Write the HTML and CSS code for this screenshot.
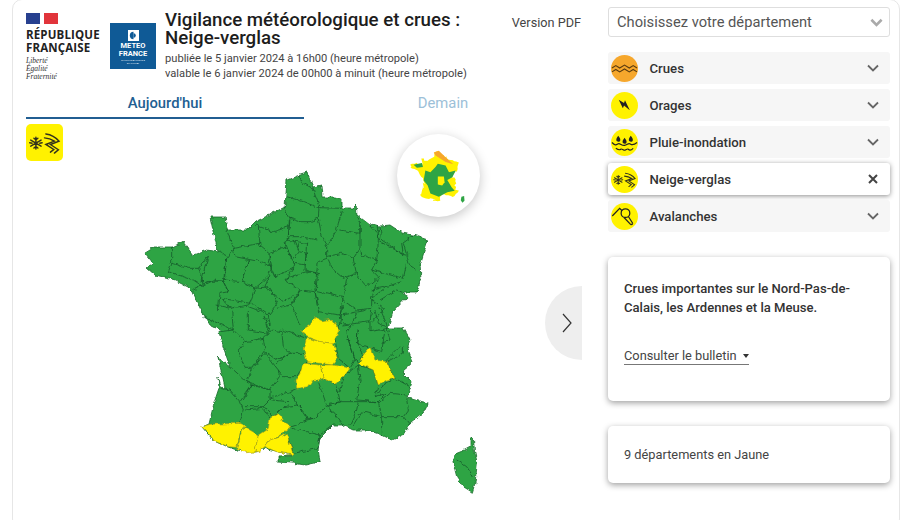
FILE: index.html
```html
<!DOCTYPE html>
<html lang="fr">
<head>
<meta charset="utf-8">
<title>Vigilance météorologique et crues</title>
<link rel="stylesheet" href="styles.css">
</head>
<body>
<svg class="defs" width="0" height="0" aria-hidden="true">
  <defs>
    <filter id="wob" x="-5%" y="-5%" width="110%" height="110%" color-interpolation-filters="sRGB">
      <feTurbulence type="fractalNoise" baseFrequency=".2" numOctaves="2" seed="4" result="n"/>
      <feDisplacementMap in="SourceGraphic" in2="n" scale="4.500" xChannelSelector="R" yChannelSelector="G"/>
    </filter>
    <filter id="soft" x="-5%" y="-5%" width="110%" height="110%"><feGaussianBlur stdDeviation=".9"/></filter>
    <symbol id="ic-neige" viewBox="0 0 28 28">
      <g fill="none" stroke="#33331c" stroke-width="1.100" stroke-linecap="round">
        <path d="M7.500 10v9M3.600 12.200l7.800 4.600M3.600 16.800l7.800-4.600M6 10.800l1.500 1.200 1.500-1.200M6 18.200l1.500-1.200 1.500 1.200M2.800 14.200l1.800.3M12.200 14.200l-1.800.3"/>
        <path d="M15 7.500c4 .5 7.500 2.500 10 5.500l-6.500 2.500 6 4-3 2.500"/>
        <path d="M14 10.500c3 .2 5.500 1.200 7.500 2.500l-6.500 2.500 6 3.800-2.500 2"/>
      </g>
    </symbol>
    <path id="france" d="M287 180L297 176L307 173L310 180L313 187L322 185L323 197L335 197L342 199L342 208L352 208L356 204L357 215L370 225L374 224L380 226L390 225L402 233L413 235L428 240L424 252L420 265L421 278L417 292L403 292L407 297L393 312L388 328L403 328L410 340L407 347L413 362L402 372L412 382L407 398L428 403L423 413L410 423L403 435L392 440L382 435L367 430L353 430L343 425L333 425L320 438L318 448L320 462L305 465L292 463L278 462L278 456L293 455L263 448L255 452L237 450L228 447L213 440L202 427L209 424L214 403L219 388L218 377L221 387L225 388L218 357L230 367L222 343L219 332L222 331L210 325L200 308L193 292L188 287L170 278L155 275L147 268L153 263L145 253L155 247L172 247L183 242L193 255L207 250L218 252L210 217L225 217L227 230L247 230L255 222L285 207Z"/>
    <path id="corse" d="M843 380L850 382L853 420L862 460L855 520L847 547L820 530L800 500L795 480L788 450L800 430L825 420L843 410Z"/>
  </defs>
</svg>

<div class="frame">
  <main class="left">
    <header class="head">
      <div class="rf">
        <div class="flag"><i class="flag-blue"></i><i class="flag-red"></i></div>
        <div class="rf-name">RÉPUBLIQUE<br>FRANÇAISE</div>
        <div class="rf-motto">Liberté<br>Égalité<br>Fraternité</div>
      </div>
      <div class="mf">
        <svg class="mf-mark" viewBox="0 0 12 12" aria-hidden="true"><rect width="12" height="12" fill="#fff"/><path d="M6 2a4 4 0 1 0 0 8z" fill="#0f5a96"/><path d="M6 3.500a2.500 2.500 0 0 1 0 5z" fill="#0f5a96"/></svg>
        <div class="mf-name">METEO<br>FRANCE</div>
        <div class="mf-tag">LE NOUVEAU MONDE<br>DU CLIMAT</div>
      </div>
      <div class="head-text">
        <h1>Vigilance météorologique et crues :<br>Neige-verglas</h1>
        <p>publiée le 5 janvier 2024 à 16h00 (heure métropole)<br>valable le 6 janvier 2024 de 00h00 à minuit (heure métropole)</p>
      </div>
      <a class="pdf">Version PDF</a>
    </header>

    <nav class="tabs">
      <a class="tab tab-on">Aujourd'hui</a>
      <a class="tab">Demain</a>
    </nav>

    <section class="map-area">
      <svg class="map" viewBox="26 119 556 401" aria-label="Carte de France">
        <g filter="url(#wob)">
        <use href="#france" fill="#2ea444" stroke="#1b6a2c" stroke-width=".8" stroke-linejoin="round"/>
        <g fill="none" stroke="#14582a" stroke-width="2.300" stroke-linejoin="round" transform="translate(130 165) scale(.33333)">
          <path d="M505 30L520 55L548 70M470 95L520 110L565 128L635 130M548 65L555 90L570 128M462 125L480 160L510 170L540 170L565 160L567 128M565 160L575 210L590 245L620 195L625 175L637 135M628 195L690 205L690 175L680 155M690 175L690 250L695 270L740 285L745 230L745 180M590 245L590 275L635 265L670 280L690 250M720 180L745 210L750 230L825 270L835 270M750 185L755 225L820 268L815 235L850 210M820 235L830 270L838 300L860 315M740 285L725 315L820 340L830 295M670 280L680 330L710 365L745 335L725 315M590 275L605 310L640 340L680 325M590 280L565 290L560 320L555 375L640 395L650 340L670 330M635 400L645 410L680 435L725 430L725 400L745 340M725 375L770 365L815 350M725 400L770 365M750 405L800 375L825 385M725 405L760 430L745 450L725 470M640 420L630 450L640 480L720 470L725 435M720 470L720 500L775 490L750 430"/>
          <path d="M375 180L430 200L478 185L480 160M385 185L390 240L420 265L465 245L475 215L478 190M478 165L475 215L510 215L565 225M470 225L530 235M505 235L505 260L530 265M465 230L485 285L505 260L490 225M495 295L525 300L530 265M530 230L525 315L565 325M420 265L415 290L435 335L490 310L495 295L465 245M310 250L390 235M310 250L315 275L390 290L425 305L415 265M265 260L295 275L310 250L290 195M355 285L335 345L375 370L415 335L425 305M290 280L283 345L335 350L355 285M235 270L213 350L280 348L290 280M125 245L125 295L175 310L205 310L235 270M125 295L115 320M115 320L190 345L220 365L213 325L205 310M190 375L250 345L280 350L295 380L270 385L265 435M295 380L280 350M335 350L375 370L360 415L275 400M260 420L300 430L275 400M300 430L355 420L360 415M375 370L415 365L445 410L415 450L365 415M415 335L405 365L460 410L505 385L510 375L465 345L490 310M465 340L530 320L565 325L555 380L510 375M510 380L485 420L510 480M565 420L555 380M555 380L565 440L630 450L640 395M415 450L420 480M440 430L480 420L505 385M355 425L395 440L420 480"/>
        </g>
        <g transform="translate(190 310) scale(.33333)">
          <g fill="none" stroke="#14582a" stroke-width="2.300" stroke-linejoin="round">
            <path d="M40 20L130 60L125 0M95 65L130 60L165 95L145 120L165 175M175 0L175 60L235 70L220 10M165 95L220 85L225 120L185 175L165 175M220 85L245 60L275 65L280 110L300 130L260 150L225 125M275 60L350 85M300 130L342 130M260 160L295 130M348 155L320 200L280 200L265 180M170 215L185 180L225 130L265 180L268 200L240 240L170 215M240 265L300 245L320 235M245 270L295 275M92 235L120 240L150 275L185 225L170 215L120 170M160 270L185 225L240 240L240 270L220 290L165 290M150 275L160 300L150 340M165 300L220 295L240 325M222 290L250 320L280 290M300 250L325 285L280 290M385 215L410 285L375 325L350 325L325 285M325 285L355 325L320 345L305 350M400 205L440 225L450 275L410 285M410 290L450 275L505 275L500 300L480 345M410 290L435 310L460 345M350 330L375 325M430 345L390 375L350 365L305 355M390 375L385 415L310 430L290 370M445 250L465 195L505 165L510 210L500 270M505 165L550 180L565 225L555 260L590 250L565 275L500 270M505 275L565 275L575 320L515 305L490 345M575 320L575 375M575 320L640 320L660 345M640 320L655 300L650 265M565 280L600 250L650 255M565 250L590 215L615 205L660 230M590 155L640 130L640 110M615 205L590 155M575 100L600 90L590 50M630 110L585 155M505 60L500 100L575 125L585 60M470 75L495 145L505 160L520 130L500 100L505 60M435 85L445 145L480 175L495 150L470 75M445 60L455 15L530 0M470 70L500 10M225 30L240 65M555 0L565 40L590 50"/>
          </g>
          <g fill="#fff200" stroke="#a49a1a" stroke-width="1.800" stroke-linejoin="round">
            <path d="M332 62L360 45L375 22L395 32L425 28L447 60L430 100L390 95L350 80L345 70Z"/>
            <path d="M352 85L390 95L430 100L445 145L430 165L390 160L350 155L342 120Z"/>
            <path d="M340 160L390 165L400 205L385 210L370 210L355 230L320 235L318 210L330 190Z"/>
            <path d="M392 165L430 165L480 175L465 195L440 222L420 215L400 205Z"/>
            <path d="M540 112L555 150L590 155L615 205L590 210L565 225L550 180L505 160L520 135Z"/>
            <path d="M35 350L60 343L150 340L163 345L150 370L140 412L115 410L70 390L55 370Z"/>
            <path d="M163 350L205 375L195 425L170 428L140 415L155 370Z"/>
            <path d="M265 310L280 335L305 350L270 375L235 395L225 410L205 425L195 425L205 375L235 355L240 325Z"/>
            <path d="M270 380L290 370L310 435L260 425L225 410L240 390Z"/>
          </g>
          <use href="#corse" fill="#2ea444" stroke="#1b6a2c" stroke-width="2.300"/>
          <path d="M800 450L830 470L850 500" fill="none" stroke="#14582a" stroke-width="2.300"/>
        </g>
        </g>
      </svg>

      <div class="risk-badge"><svg class="icon"><use href="#ic-neige"/></svg></div>

      <div class="mini">
        <svg viewBox="51 42 246 246" aria-hidden="true">
          <g filter="url(#soft)">
            <use href="#france" transform="translate(16 4) scale(.51)" fill="#fff200"/>
            <path d="M135 150L150 155L165 140L172 130L195 135L205 155L225 150L215 170L200 178L213 200L222 210L200 215L175 228L150 218L142 195L130 180Z" fill="#2ea444"/>
            <path d="M172 168L190 168L192 185L185 195L172 192Z" fill="#fff200"/>
            <path d="M100 133L125 128L128 140L110 142Z" fill="#2ea444"/>
            <path d="M160 97L175 92L192 108L218 132L195 125L165 106Z" fill="#f6a72c"/>
            <path d="M242 228L250 226L251 240L245 246L240 238Z" fill="#2ea444"/>
          </g>
        </svg>
      </div>

      <button class="next" aria-label="Suivant">
        <svg viewBox="0 0 10 20" aria-hidden="true"><path d="M1 1l8 9-8 9" fill="none" stroke="#333" stroke-width="1.200"/></svg>
      </button>
    </section>
  </main>

  <aside class="right">
    <div class="select">
      <span>Choisissez votre département</span>
      <svg viewBox="0 0 14 9" aria-hidden="true"><path d="M1.500 1.500L7 7l5.500-5.500" fill="none" stroke="#aaa" stroke-width="2.800"/></svg>
    </div>

    <ul class="risks">
      <li class="risk">
        <svg class="bubble orange" viewBox="0 0 28 28" aria-hidden="true"><g fill="none" stroke="#5b3c10" stroke-width="1.200"><path d="M1 13.500l4-2.500 4 2.500 5-3 5 3 4-2.500 4 2.500"/><path d="M1 17.500l4-2.500 4 2.500 5-3 5 3 4-2.500 4 2.500"/></g></svg>
        <span>Crues</span>
        <svg class="chev" viewBox="0 0 12 8" aria-hidden="true"><path d="M1 1.500l5 5 5-5"/></svg>
      </li>
      <li class="risk">
        <svg class="bubble" viewBox="0 0 28 28" aria-hidden="true"><path d="M8 8l5.500 3.500 1-3 5 10.500-6-5-1.200 2.800z" fill="#222"/></svg>
        <span>Orages</span>
        <svg class="chev" viewBox="0 0 12 8" aria-hidden="true"><path d="M1 1.500l5 5 5-5"/></svg>
      </li>
      <li class="risk">
        <svg class="bubble" viewBox="0 0 28 28" aria-hidden="true"><path d="M7.500 7c1.800 2.600 2.600 3.600 2 5.200s-4 1.200-4-.8 1-2.600 2-4.400zM20.500 7c1.800 2.600 2.600 3.600 2 5.200s-4 1.200-4-.8 1-2.600 2-4.400zM14 9c1.800 2.600 2.600 3.600 2 5.200s-4 1.200-4-.8 1-2.600 2-4.400z" fill="#222"/><g fill="none" stroke="#222" stroke-width="1.200"><path d="M1 14c3 3 4 3 6 1.500s4 2 7 1.500 4-3 6-1.500 4 1 7-1.500"/><path d="M5 20c3 2 4 2 5 1s3 1 4 1 3-2 4-1 3 1 5-1"/></g></svg>
        <span>Pluie-inondation</span>
        <svg class="chev" viewBox="0 0 12 8" aria-hidden="true"><path d="M1 1.500l5 5 5-5"/></svg>
      </li>
      <li class="risk risk-on">
        <svg class="bubble" aria-hidden="true"><use href="#ic-neige"/></svg>
        <span>Neige-verglas</span>
        <svg class="close" viewBox="0 0 10 10" aria-hidden="true"><path d="M1 1l8 8M9 1l-8 8"/></svg>
      </li>
      <li class="risk">
        <svg class="bubble" viewBox="0 0 28 28" aria-hidden="true"><g fill="none" stroke="#222" stroke-width="1.300"><path d="M1.300 13.500L9 5.500l2.500 2.500"/><circle cx="15" cy="10.500" r="4.500"/><path d="M18 14l4.500 7M13.500 15l7 7.500M22.500 21a2 2 0 0 1-2 1.500"/></g></svg>
        <span>Avalanches</span>
        <svg class="chev" viewBox="0 0 12 8" aria-hidden="true"><path d="M1 1.500l5 5 5-5"/></svg>
      </li>
    </ul>

    <div class="card card-info">
      <p class="card-strong">Crues importantes sur le Nord-Pas-de-Calais, les Ardennes et la Meuse.</p>
      <a class="bulletin">Consulter le bulletin <i class="caret"></i></a>
    </div>

    <div class="card card-count">9 départements en Jaune</div>
  </aside>
</div>
</body>
</html>
```

FILE: styles.css
```css
* { box-sizing: border-box; }

html, body {
  margin: 0;
  height: 520px;
  overflow: hidden;
  background: #fff;
  font-family: Roboto, "Liberation Sans", sans-serif;
  color: #333;
}

.defs { display: block; height: 0; }

.frame {
  display: flex;
  gap: 26px;
  width: 888px;
  height: 530px;
  margin: -1px 0 0 12px;
  padding: 7px 9px 0 13px;
  border: 1px solid #e6e6e6;
  border-radius: 10px;
}

/* left column */
.left { width: 556px; flex: none; display: flex; flex-direction: column; }

.head { display: flex; height: 82px; }

.rf { width: 74px; flex: none; margin-right: 10px; padding-top: 6px; }
.flag { display: flex; justify-content: space-between; width: 32px; height: 11px; }
.flag i { display: block; width: 14px; height: 11px; }
.flag-blue { background: #27408f; }
.flag-red { background: #e1343b; }
.rf-name {
  margin-top: 4px;
  font-family: "Open Sans", Roboto, sans-serif;
  font-weight: 700;
  font-size: 11.500px;
  line-height: 13px;
  letter-spacing: .15px;
  color: #222;
  white-space: nowrap;
}
.rf-motto {
  margin-top: 3px;
  font-family: "Liberation Serif", serif;
  font-style: italic;
  font-size: 7.500px;
  line-height: 8px;
  color: #333;
}

.mf {
  width: 46px;
  height: 46px;
  flex: none;
  margin: 16px 9px 0 0;
  padding-top: 7px;
  background: #0f5a96;
  color: #fff;
  text-align: center;
}
.mf-mark { display: block; width: 11px; height: 11px; margin: 0 auto 1px; }
.mf-name { font-size: 7.500px; line-height: 8px; font-weight: 700; }
.mf-tag { margin-top: 1px; font-size: 2.500px; line-height: 3px; opacity: .8; }

.head-text h1 {
  margin: 4px 0 4px;
  font-size: 18.700px;
  line-height: 18px;
  font-weight: 500;
  color: #1d1d1d;
  white-space: nowrap;
}
.head-text p {
  margin: 0;
  font-size: 11.150px;
  line-height: 15px;
  color: #444;
  white-space: nowrap;
}
.pdf {
  margin: 8px 1px 0 auto;
  font-size: 12.700px;
  line-height: 15px;
  color: #444;
  white-space: nowrap;
}

.tabs { display: grid; grid-template-columns: 278px 278px; height: 30px; }
.tab {
  padding-top: 6px;
  text-align: center;
  font-size: 14.800px;
  line-height: 17px;
  font-weight: 400;
  color: #9cc0d8;
}
.tab-on {
  font-weight: 500;
  color: #215e92;
  border-bottom: 2px solid #215e92;
}

.map-area { position: relative; height: 401px; }
.map { display: block; width: 556px; height: 401px; }

.risk-badge {
  position: absolute;
  left: 0;
  top: 5px;
  width: 37px;
  height: 37px;
  border-radius: 5px;
  background: #fff200;
}
.icon { display: block; width: 37px; height: 37px; }

.mini {
  position: absolute;
  left: 371px;
  top: 15px;
  width: 83px;
  height: 83px;
  border-radius: 50%;
  background: #fff;
  box-shadow: 0 3px 12px rgba(0, 0, 0, .22);
}
.mini svg { display: block; width: 83px; height: 83px; }

.next {
  position: absolute;
  right: 0;
  top: 167px;
  width: 37px;
  height: 74px;
  padding: 0;
  border: 0;
  border-radius: 37px 0 0 37px;
  background: #eee;
}
.next svg { display: block; width: 10px; height: 20px; margin-left: 17px; }

/* right column */
.right { width: 282px; flex: none; }

.select {
  display: flex;
  align-items: center;
  justify-content: space-between;
  height: 30px;
  padding: 0 6px 0 8px;
  border: 1px solid #dedede;
  border-radius: 3px;
  font-size: 14.700px;
  color: #555;
}
.select svg { width: 13px; height: 9px; }

.risks { margin: 15px 0 0; padding: 0; list-style: none; display: flex; flex-direction: column; gap: 5px; }
.risk {
  display: flex;
  align-items: center;
  height: 32px;
  padding: 0 11px 0 3px;
  border-radius: 3px;
  background: #f6f6f6;
  font-size: 13.200px;
  font-weight: 500;
  color: #333;
}
.risk span { flex: 1; margin-left: 11.500px; }
.risk-on { background: #fff; box-shadow: 0 1px 5px rgba(0, 0, 0, .45); }

.bubble { width: 27px; height: 27px; flex: none; border-radius: 50%; background: #fff200; }
.bubble.orange { background: #f6a72c; }

.chev { width: 12px; height: 8px; }
.chev path { fill: none; stroke: #666; stroke-width: 1.800; }
.close { width: 10px; height: 10px; margin-right: 1px; }
.close path { fill: none; stroke: #444; stroke-width: 2; }

.card {
  border-radius: 5px;
  background: #fff;
  box-shadow: 0 2px 6px rgba(0, 0, 0, .38);
  padding: 0 16px;
}
.card-info { height: 144px; margin-top: 25px; padding-top: 22px; }
.card-strong {
  margin: 0 0 28px;
  font-size: 13.100px;
  line-height: 19px;
  font-weight: 500;
  color: #333;
}
.bulletin {
  display: inline-block;
  border-bottom: 1px solid #777;
  font-size: 12.800px;
  line-height: 16px;
  color: #444;
}
.caret {
  display: inline-block;
  margin-left: 3px;
  vertical-align: 2px;
  border-left: 3.500px solid transparent;
  border-right: 3.500px solid transparent;
  border-top: 4px solid #333;
}
.card-count {
  height: 57px;
  margin-top: 25px;
  display: flex;
  align-items: center;
  font-size: 12.800px;
  color: #444;
}
```
